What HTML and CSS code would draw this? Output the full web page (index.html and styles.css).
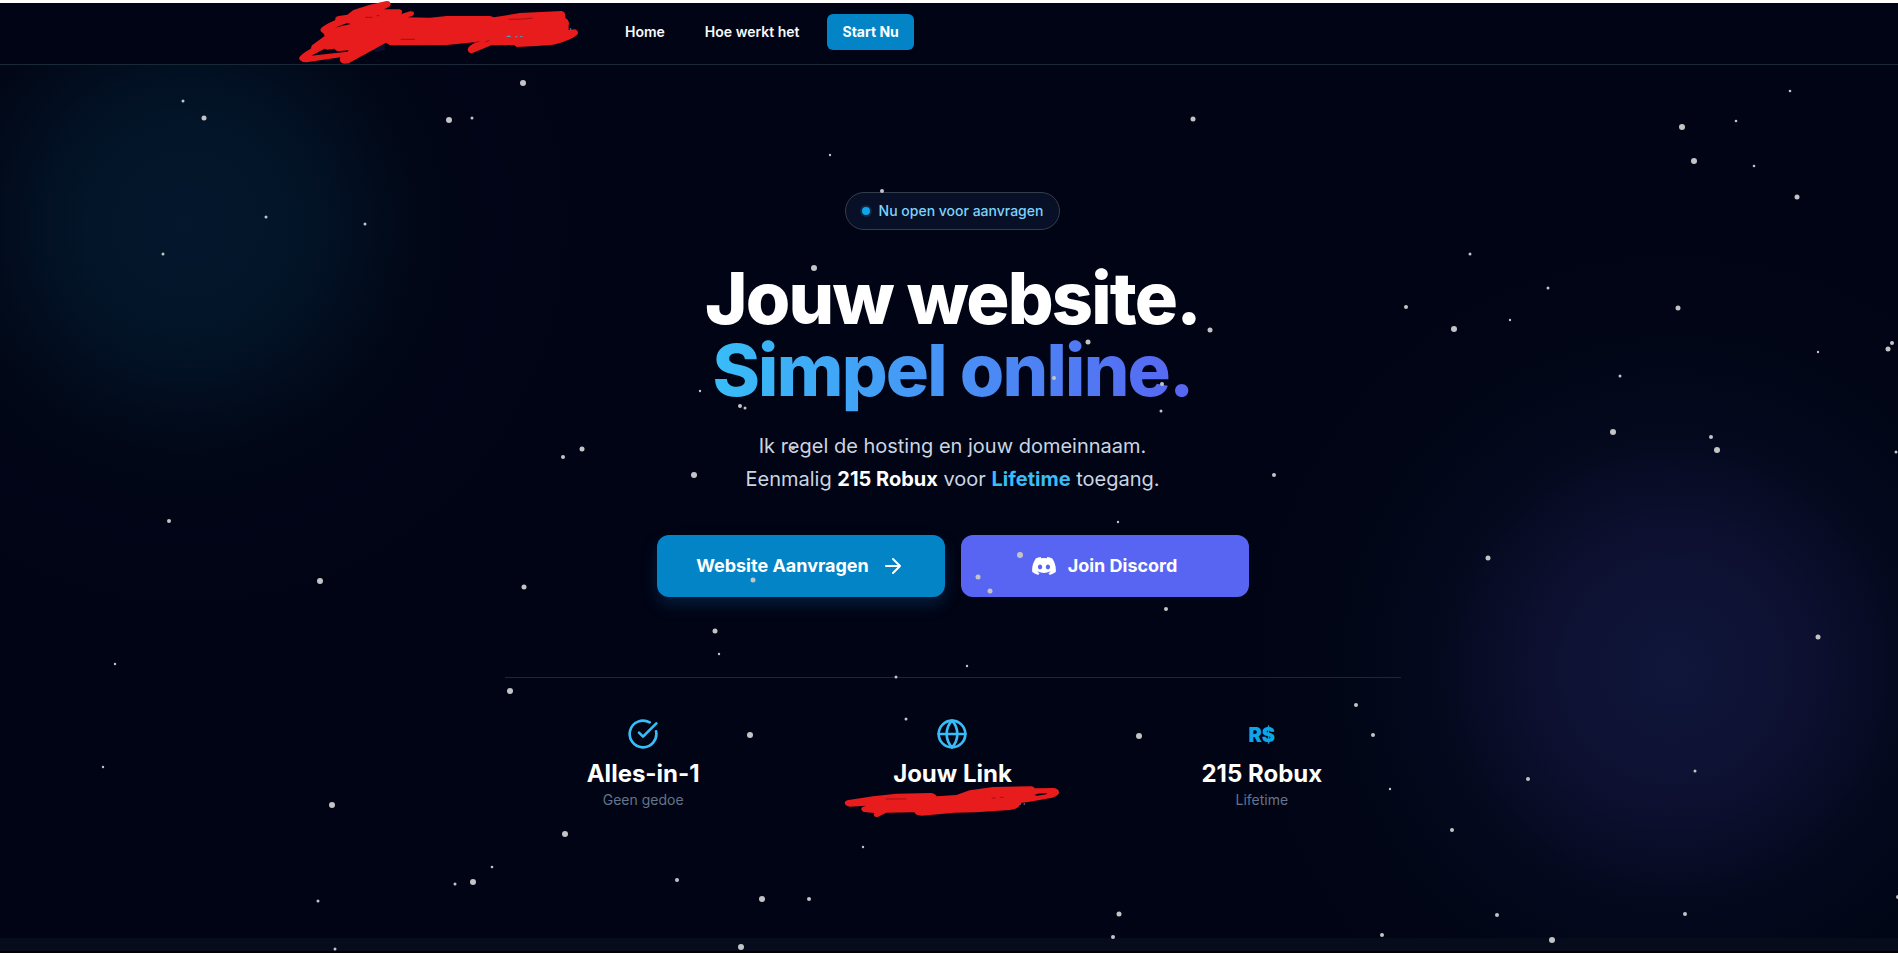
FILE: index.html
```html
<!DOCTYPE html>
<html lang="nl">
<head>
<meta charset="utf-8">
<meta name="viewport" content="width=device-width, initial-scale=1">
<title>Jouw website. Simpel online.</title>
<link rel="stylesheet" href="styles.css">
</head>
<body>
<div class="page">
  <header class="header">
    <div class="header-inner">
      <div class="logo">
        <svg class="scribble scribble-logo" viewBox="0 0 900 210" aria-hidden="true">
          <path class="speck-dark" d="M240 150L285 132L284 150L262 156Z"/>
          <path class="ink" d="M286 4Q300 0 302 12Q303 20 282 28L330 28Q340 32 334 42L360 34Q374 32 372 42Q368 50 352 52L420 53L470 48L600 48L612 52L690 39L815 33Q828 36 826 54Q840 62 836 76L836 90L856 88Q868 94 862 104Q840 122 790 134L740 138L680 141L672 135L604 136L546 160Q534 160 533 148Q536 136 560 126L470 135L300 136L288 128L176 190Q152 194 149 180L151 172L50 187Q28 186 27 174Q30 164 62 146L66 136L104 108L100 100Q88 94 92 86Q100 76 136 60Q134 50 146 48L172 44L190 30L240 14Z"/>
          <path class="gap" d="M134 83L172 69L182 72L146 80ZM64 167L104 146L112 149L132 146L142 154L176 151L172 155L110 162Z"/>
          <path class="crease" d="M225 52H248M260 47H268M656 58L700 57L728 54M332 118H375M553 128L568 124M586 126L598 121"/>
          <path class="speck" d="M648 111L656 106L664 111ZM838 84L844 86L843 92ZM676 109H682V112H676ZM690 108H698V110H690Z"/>
        </svg>
      </div>
      <nav class="nav">
        <a class="nav-link" href="#home">Home</a>
        <a class="nav-link" href="#werking">Hoe werkt het</a>
        <a class="nav-cta" href="#start">Start Nu</a>
      </nav>
    </div>
  </header>

  <main class="hero">
    <div class="badge"><span class="dot"></span>Nu open voor aanvragen</div>
    <h1 class="title">Jouw website.<br><span class="title-accent">Simpel online.</span></h1>
    <p class="lead">Ik regel de hosting en jouw domeinnaam.<br>Eenmalig <strong class="lead-price">215 Robux</strong> voor <strong class="lead-life">Lifetime</strong> toegang.</p>
    <div class="actions">
      <a class="btn btn-primary" href="#aanvragen">Website Aanvragen
        <svg class="icon-arrow" viewBox="0 0 24 24" aria-hidden="true"><path d="M5 12h14M12 5l7 7-7 7"/></svg>
      </a>
      <a class="btn btn-discord" href="#discord">
        <svg class="icon-discord" viewBox="0 0 127.14 96.36" aria-hidden="true"><path d="M107.7 8.07A105.15 105.15 0 0 0 81.47 0a72.06 72.06 0 0 0-3.36 6.83 97.68 97.68 0 0 0-29.11 0A72.37 72.37 0 0 0 45.64 0a105.89 105.89 0 0 0-26.25 8.09C2.79 32.65-1.71 56.6.54 80.21a105.73 105.73 0 0 0 32.17 16.15 77.7 77.7 0 0 0 6.89-11.11 68.42 68.42 0 0 1-10.85-5.18c.91-.66 1.8-1.34 2.66-2a75.57 75.57 0 0 0 64.32 0c.87.71 1.76 1.39 2.66 2a68.68 68.68 0 0 1-10.87 5.19 77 77 0 0 0 6.89 11.1 105.25 105.25 0 0 0 32.19-16.14c2.64-27.38-4.51-51.11-18.9-72.15ZM42.45 65.69C36.18 65.69 31 60 31 53s5-12.74 11.43-12.74S54 46 53.89 53s-5.05 12.69-11.44 12.69Zm42.24 0C78.41 65.69 73.25 60 73.25 53s5-12.74 11.44-12.74S96.23 46 96.12 53s-5.04 12.69-11.43 12.69Z"/></svg>
        Join Discord
      </a>
    </div>
    <section class="stats">
      <div class="stat">
        <svg class="stat-icon" viewBox="0 0 24 24" aria-hidden="true"><path d="M21.801 10A10 10 0 1 1 17 3.335"/><path d="m9 11 3 3L22 4"/></svg>
        <h2 class="stat-title">Alles-in-1</h2>
        <p class="stat-text">Geen gedoe</p>
      </div>
      <div class="stat">
        <svg class="stat-icon" viewBox="0 0 24 24" aria-hidden="true"><circle cx="12" cy="12" r="10"/><path d="M12 2a14.5 14.5 0 0 0 0 20 14.5 14.5 0 0 0 0-20"/><path d="M2 12h20"/></svg>
        <h2 class="stat-title">Jouw Link</h2>
        <div class="stat-text">
          <svg class="scribble scribble-link" viewBox="0 0 660 100" aria-hidden="true">
            <path class="ink" d="M12 42L90 30L160 22L265 20Q278 22 280 30L340 26L380 12L450 2L566 0Q576 2 574 6L634 5Q650 10 648 20Q644 30 628 34L560 46L532 50Q530 68 500 71L400 78L335 79L236 88Q218 88 214 78L130 79L104 92Q88 92 94 80L62 77Q50 70 58 62L70 58L20 61Q2 58 6 46Z"/>
            <path class="gap" d="M574 26L584 22L612 20L610 24L582 28Z"/>
            <path class="crease" d="M128 38H190M446 35H458M470 33H482"/>
            <path class="speck-text" d="M530 51h4v4h-4ZM542 51h4v4h-4Z"/>
          </svg>
        </div>
      </div>
      <div class="stat">
        <div class="stat-sign">R$</div>
        <h2 class="stat-title">215 Robux</h2>
        <p class="stat-text">Lifetime</p>
      </div>
    </section>
  </main>
  <section class="next-section"></section>

  <svg class="stars" viewBox="0 0 1898 953" preserveAspectRatio="xMidYMin slice" aria-hidden="true">
    <g>
      <circle cx="523" cy="83" r="3"/><circle cx="449" cy="120" r="3"/><circle cx="320" cy="581" r="3"/><circle cx="510" cy="691" r="3"/><circle cx="332" cy="805" r="3"/><circle cx="565" cy="834" r="3"/><circle cx="473" cy="882" r="3"/><circle cx="1682" cy="127" r="3"/><circle cx="1694" cy="161" r="3"/><circle cx="1454" cy="329" r="3"/><circle cx="1613" cy="432" r="3"/><circle cx="1717" cy="450" r="3"/><circle cx="1552" cy="940" r="3"/><circle cx="762" cy="899" r="3"/><circle cx="750" cy="735" r="3"/><circle cx="1139" cy="736" r="3"/><circle cx="694" cy="475" r="3"/><circle cx="1020" cy="555" r="3"/><circle cx="814" cy="268" r="3"/><circle cx="741" cy="947" r="3"/>
    </g>
    <g>
      <circle cx="204" cy="118" r="2.5"/><circle cx="582" cy="449" r="2.5"/><circle cx="524" cy="587" r="2.5"/><circle cx="1797" cy="197" r="2.5"/><circle cx="1678" cy="308" r="2.5"/><circle cx="1888" cy="349" r="2.5"/><circle cx="1488" cy="558" r="2.5"/><circle cx="1818" cy="637" r="2.5"/><circle cx="1119" cy="914" r="2.5"/><circle cx="753" cy="580" r="2.5"/><circle cx="978" cy="577" r="2.5"/><circle cx="990" cy="591" r="2.5"/><circle cx="715" cy="631" r="2.5"/><circle cx="1210" cy="330" r="2.5"/><circle cx="1088" cy="342" r="2.5"/><circle cx="1193" cy="119" r="2.5"/>
    </g>
    <g>
      <circle cx="1711" cy="437" r="2"/><circle cx="1528" cy="779" r="2"/><circle cx="1452" cy="830" r="2"/><circle cx="1382" cy="935" r="2"/><circle cx="1898" cy="897" r="2"/><circle cx="809" cy="899" r="2"/><circle cx="1113" cy="937" r="2"/><circle cx="1166" cy="609" r="2"/><circle cx="882" cy="191" r="2"/><circle cx="1054" cy="378" r="2"/><circle cx="1162" cy="384" r="2"/><circle cx="740" cy="406" r="2"/><circle cx="793" cy="448" r="2"/><circle cx="563" cy="457" r="2"/><circle cx="169" cy="521" r="2"/><circle cx="1406" cy="307" r="2"/><circle cx="1892" cy="343" r="2"/><circle cx="1274" cy="475" r="2"/><circle cx="1356" cy="705" r="2"/><circle cx="1373" cy="735" r="2"/><circle cx="1497" cy="915" r="2"/><circle cx="1685" cy="914" r="2"/><circle cx="677" cy="880" r="2"/>
    </g>
    <g>
      <circle cx="183" cy="101" r="1.5"/><circle cx="472" cy="118" r="1.5"/><circle cx="266" cy="217" r="1.5"/><circle cx="365" cy="224" r="1.5"/><circle cx="163" cy="254" r="1.5"/><circle cx="492" cy="867" r="1.3"/><circle cx="455" cy="884" r="1.5"/><circle cx="318" cy="901" r="1.5"/><circle cx="335" cy="949" r="1.5"/><circle cx="1790" cy="91" r="1.3"/><circle cx="1736" cy="121" r="1.3"/><circle cx="1754" cy="166" r="1.3"/><circle cx="1470" cy="254" r="1.5"/><circle cx="1548" cy="288" r="1.5"/><circle cx="1620" cy="376" r="1.5"/><circle cx="1896" cy="452" r="1.5"/><circle cx="1695" cy="771" r="1.5"/><circle cx="896" cy="677" r="1.5"/><circle cx="906" cy="719" r="1.5"/><circle cx="745" cy="408" r="1.5"/><circle cx="1161" cy="411" r="1.5"/>
      <circle cx="115" cy="664" r="1.2"/><circle cx="103" cy="767" r="1.2"/><circle cx="1510" cy="320" r="1.2"/><circle cx="1818" cy="352" r="1.2"/><circle cx="1390" cy="789" r="1.2"/><circle cx="863" cy="847" r="1.2"/><circle cx="967" cy="666" r="1.2"/><circle cx="1118" cy="522" r="1.2"/><circle cx="719" cy="654" r="1.2"/><circle cx="700" cy="391" r="1.2"/><circle cx="830" cy="155" r="1.2"/>
    </g>
  </svg>
</div>
</body>
</html>
```
FILE: styles.css
```css
* { box-sizing: border-box; margin: 0; }
html { background: #000; }
body {
  font-family: Inter, "Liberation Sans", sans-serif;
  color: #fff;
  overflow-x: hidden;
}
a { color: inherit; text-decoration: none; }

.page {
  position: relative;
  min-height: 100vh;
  display: flex;
  flex-direction: column;
  padding-bottom: 2px;
  overflow: hidden;
}

.header {
  background: #010414;
  border-top: 3px solid #fff;
  border-bottom: 1px solid #1a2936;
  padding: 11px 0 14px 8px;
}
.header-inner {
  max-width: 1280px;
  margin: 0 auto;
  display: flex;
  align-items: center;
  gap: 40px;
}
.logo { position: relative; width: 272px; height: 36px; }
.scribble { position: absolute; z-index: 2; }
.scribble-logo { left: -23px; top: -14px; width: 300px; height: 70px; }
.ink { fill: #e81c1c; }
.gap { fill: #010414; }
.crease { fill: none; stroke: #9d1216; stroke-width: 3; }
.speck { fill: #38a8e0; }
.speck-dark { fill: #0b1030; }
.speck-text { fill: #64748b; }

.nav { display: flex; align-items: center; font-size: 14px; line-height: 20px; }
.nav-link { font-weight: 600; color: #f8fafc; margin-right: 40px; }
.nav-link + .nav-cta { margin-left: -12px; }
.nav-cta {
  padding: 8px 15px;
  border-radius: 6px;
  background: #0284c7;
  font-weight: 700;
}

.hero {
  flex: 1;
  display: flex;
  flex-direction: column;
  align-items: center;
  padding: 127px 0 64px 7px;
  text-align: center;
  background:
    radial-gradient(circle 400px at 187px 160px, rgb(3, 23, 45) 0, rgb(3, 21, 40) 25%, rgb(2, 16, 35) 38%, rgba(2, 13, 30, 0.8) 48%, rgba(2, 10, 26, 0.55) 58%, rgba(1, 6, 26, 0.4) 75%, transparent 100%),
    radial-gradient(circle 420px at calc(100% - 225px) 604px, rgb(15, 22, 57) 0, rgb(14, 19, 53) 20%, rgb(13, 16, 48) 32%, rgb(8, 12, 38) 46%, rgba(5, 10, 32, 0.8) 56%, rgba(2, 9, 28, 0.55) 72%, transparent 100%),
    #010414;
}

.badge {
  display: flex;
  align-items: center;
  gap: 9px;
  padding: 8px 16px;
  border: 1px solid #343d4c;
  border-radius: 19px;
  background: #081027;
  font-size: 14px;
  font-weight: 500;
  line-height: 20px;
  color: #7dd3fc;
}
.dot {
  width: 8px;
  height: 8px;
  border-radius: 50%;
  background: #0ea5e9;
  box-shadow: 0 0 0 2px #0b2845;
}

.title {
  margin-top: 32px;
  font-size: 72px;
  line-height: 72px;
  font-weight: 800;
  letter-spacing: -0.025em;
}
.title-accent {
  background: linear-gradient(to right, #38bdf8, #5865f2);
  -webkit-background-clip: text;
  background-clip: text;
  color: transparent;
}

.lead {
  margin-top: 24px;
  font-size: 20px;
  line-height: 33px;
  color: #cbd5e1;
}
.lead-price { color: #fff; font-weight: 700; }
.lead-life { color: #38bdf8; font-weight: 700; }

.actions { display: flex; flex-wrap: wrap; justify-content: center; gap: 16px; margin-top: 39px; }
.btn {
  display: flex;
  align-items: center;
  justify-content: center;
  gap: 12px;
  width: 288px;
  padding: 17px 16px;
  border-radius: 12px;
  font-size: 18px;
  line-height: 28px;
  font-weight: 700;
}
.btn-primary { background: #0284c7; box-shadow: 0 8px 16px rgba(14, 90, 160, 0.28); }
.btn-discord { background: #5865f2; }
.icon-arrow { width: 24px; height: 24px; fill: none; stroke: #fff; stroke-width: 2; stroke-linecap: round; stroke-linejoin: round; }
.icon-discord { width: 24px; height: 18px; fill: #fff; }

.stats {
  display: grid;
  grid-template-columns: repeat(3, 1fr);
  gap: 32px;
  width: 100%;
  max-width: 896px;
  margin-top: 80px;
  padding-top: 40px;
  border-top: 1px solid #1e2736;
}
.stat { display: flex; flex-direction: column; align-items: center; }
.stat-icon { width: 32px; height: 32px; fill: none; stroke: #38bdf8; stroke-width: 2; stroke-linecap: round; stroke-linejoin: round; }
.stat-sign { padding-top: 2px; font-size: 20px; line-height: 30px; font-weight: 900; color: #0ea5e9; }
.stat-title { margin-top: 8px; font-size: 24px; line-height: 32px; font-weight: 700; }
.stat-text { position: relative; min-height: 20px; font-size: 14px; line-height: 20px; color: #64748b; }
.scribble-link { left: -109px; top: -4px; width: 220px; height: 34px; }

.next-section { height: 13px; background: #070c1d; }

.stars {
  position: absolute;
  inset: 0;
  width: 100%;
  height: 100%;
  fill: #c4c4c6;
  pointer-events: none;
}
```
